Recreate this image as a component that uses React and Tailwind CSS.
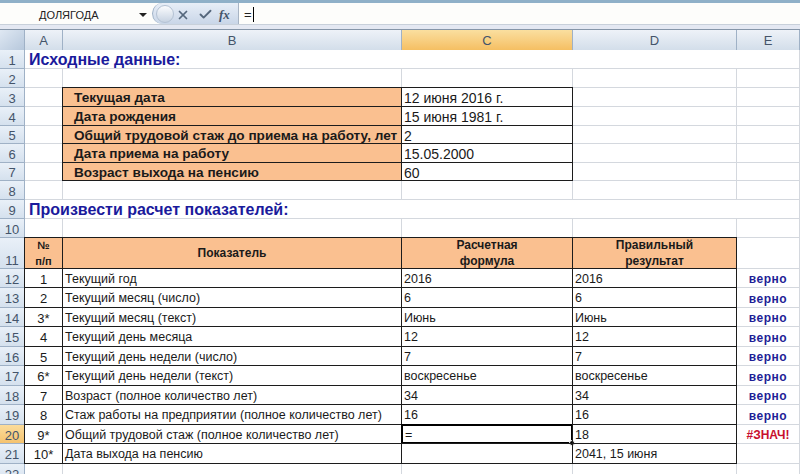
import { X, Check } from 'lucide-react'

const font = "font-['Liberation_Sans',Arial,sans-serif]"

const rowHeights = {
  1: 'h-[19px]', 2: 'h-[19px]', 3: 'h-[19px]', 4: 'h-[19px]', 5: 'h-[18px]', 6: 'h-[19px]', 7: 'h-[18px]',
  8: 'h-[19px]', 9: 'h-[19px]', 10: 'h-[19px]', 11: 'h-[31px]', 12: 'h-[19px]', 13: 'h-[20px]', 14: 'h-[19px]',
  15: 'h-[20px]', 16: 'h-[19px]', 17: 'h-[20px]', 18: 'h-[19px]', 19: 'h-[20px]', 20: 'h-[19px]', 21: 'h-[20px]', 22: 'h-[19px]',
}

const info = [
  ['Текущая дата', '12 июня 2016 г.'],
  ['Дата рождения', '15 июня 1981 г.'],
  ['Общий трудовой стаж до приема на работу, лет', '2'],
  ['Дата приема на работу', '15.05.2000'],
  ['Возраст выхода на пенсию', '60'],
]

const rows = [
  ['1', 'Текущий год', '2016', '2016', 'верно'],
  ['2', 'Текущий месяц (число)', '6', '6', 'верно'],
  ['3*', 'Текущий месяц (текст)', 'Июнь', 'Июнь', 'верно'],
  ['4', 'Текущий день месяца', '12', '12', 'верно'],
  ['5', 'Текущий день недели (число)', '7', '7', 'верно'],
  ['6*', 'Текущий день недели (текст)', 'воскресенье', 'воскресенье', 'верно'],
  ['7', 'Возраст (полное количество лет)', '34', '34', 'верно'],
  ['8', 'Стаж работы на предприятии (полное количество лет)', '16', '16', 'верно'],
  ['9*', 'Общий трудовой стаж (полное количество лет)', '=', '18', '#ЗНАЧ!'],
  ['10*', 'Дата выхода на пенсию', '', '2041, 15 июня', ''],
]

function Plain({ className = '', children }) {
  return (
    <div className={`border-r border-b border-[#d4d8de] min-w-0 pt-[2px] flex items-center whitespace-nowrap ${className}`}>
      {children}
    </div>
  )
}

function Boxed({ className = '', children }) {
  return (
    <div className={`relative border border-[#1c1c1c] -ml-px -mt-px min-w-0 flex items-center whitespace-nowrap ${className}`}>
      {children}
    </div>
  )
}

function RowHeader({ n, active }) {
  return (
    <div
      className={`${rowHeights[n]} border-r border-b border-[#9fb1c6] flex justify-center text-[13px] text-[#44546a] ${
        n === 11 ? 'items-end pb-[1px]' : 'items-center pt-[2px]'
      } ${active ? 'bg-gradient-to-b from-[#fbdc9b] to-[#f5c36f] text-[#5c4a20]' : 'bg-gradient-to-b from-[#e9f0f8] to-[#d5e1ee]'}`}
    >
      {n}
    </div>
  )
}

function ColHeader({ label, active }) {
  return (
    <div
      className={`h-[20px] border-r border-[#9fb1c6] flex items-center justify-center text-[13px] text-[#44546a] ${
        active ? 'bg-gradient-to-b from-[#fadf9f] to-[#f5bf62]' : 'bg-gradient-to-b from-[#eef2f8] to-[#d3deea]'
      }`}
    >
      {label}
    </div>
  )
}

function FormulaBar() {
  return (
    <div className="h-[25px] flex bg-[#fdfdfb] border-t-[3px] border-[#8fb0c8] border-b border-b-[#c8d0da]">
      <div className="w-[152px] flex items-center pl-[39px] pt-[3px] text-[11px] text-[#222]">
        <span className="flex-1">ДОЛЯГОДА</span>
        <span className="w-0 h-0 mr-[5px] border-x-[4px] border-x-transparent border-t-[4px] border-t-[#222]" />
      </div>
      <div className="w-[86px] relative flex items-center bg-gradient-to-b from-[#e8eef7] to-[#c9d6e8] rounded-l-[14px] border-l border-[#9db0c6]">
        <div className="w-[18px] h-[18px] ml-[3px] rounded-full bg-gradient-to-b from-[#fbfcfe] to-[#c7d3e2] border border-[#b4c2d3]" />
        <X size={14} strokeWidth={3} className="ml-[2px] mt-[2px] text-[#55677c]" />
        <Check size={15} strokeWidth={3} className="ml-[8px] mt-[2px] text-[#55677c]" />
        <span className="ml-[6px] mt-[2px] font-['Liberation_Serif',serif] italic font-bold text-[13px] text-[#44546a]">fx</span>
      </div>
      <div className="flex-1 flex items-center border-l border-[#a8b4c4] pl-[5px] pt-[2px] text-[13px] text-[#222]">
        =<span className="ml-px w-px h-[15px] bg-black" />
      </div>
    </div>
  )
}

export default function App() {
  const peach = 'bg-[#fac090]'
  const cell = 'pt-[2px]'
  const head = 'h-[32px] flex-col justify-center font-bold leading-[16px]'
  return (
    <div className={`w-[800px] h-[474px] overflow-hidden bg-white ${font}`}>
      <FormulaBar />
      <div className="h-[5px] bg-[#e4e8f2] border-b border-[#8595a8]" />

      <div className="grid grid-cols-[25px_38px_339px_171px_164px_63px] text-[12.5px] leading-none text-[#1a1a1a]">
        <div className="h-[20px] bg-gradient-to-br from-[#dfe8f3] to-[#b7c8dc] border-r border-[#9fb1c6]" />
        <ColHeader label="A" />
        <ColHeader label="B" />
        <ColHeader label="C" active />
        <ColHeader label="D" />
        <ColHeader label="E" />

        {/* row 1 */}
        <RowHeader n={1} />
        <Plain className="col-span-5 pl-[4px] text-[16px] font-bold text-[#1a1a9c]">Исходные данные:</Plain>

        <RowHeader n={2} />
        {[0, 1, 2, 3, 4].map((i) => <Plain key={i} />)}

        {/* rows 3-7 */}
        {info.map(([label, value], i) => (
          <div key={label} className="contents">
            <RowHeader n={i + 3} />
            <Plain />
            <Boxed className={`${peach} ${cell} pl-[11px] text-[13.6px] font-bold`}>{label}</Boxed>
            <Boxed className={`${cell} pl-[2px] text-[14px]`}>{value}</Boxed>
            <Plain />
            <Plain />
          </div>
        ))}

        <RowHeader n={8} />
        {[0, 1, 2, 3, 4].map((i) => <Plain key={i} />)}

        <RowHeader n={9} />
        <Plain className="col-span-5 pl-[4px] text-[16px] font-bold text-[#1a1a9c]">Произвести расчет показателей:</Plain>

        <RowHeader n={10} />
        {[0, 1, 2, 3, 4].map((i) => <Plain key={i} />)}

        {/* table head */}
        <RowHeader n={11} />
        <Boxed className={`${peach} ${head} text-[11px]`}>
          <span>№</span>
          <span>п/п</span>
        </Boxed>
        <Boxed className={`${peach} h-[32px] justify-center text-[12px] font-bold`}>Показатель</Boxed>
        <Boxed className={`${peach} ${head} text-[12px]`}>
          <span>Расчетная</span>
          <span>формула</span>
        </Boxed>
        <Boxed className={`${peach} ${head} text-[12px]`}>
          <span>Правильный</span>
          <span>результат</span>
        </Boxed>
        <Plain />

        {/* table body */}
        {rows.map(([num, name, formula, result, check], i) => {
          const n = i + 12
          const selected = n === 20
          return (
            <div key={n} className="contents">
              <RowHeader n={n} active={selected} />
              <Boxed className={`${cell} justify-center text-[13px]`}>{num}</Boxed>
              <Boxed className={`${cell} pl-[2px]`}>{name}</Boxed>
              <Boxed className={`${cell} pl-[2px] ${selected ? 'border-2 border-black' : ''}`}>
                {formula}
                {selected && (
                  <span className="absolute -right-[4px] -bottom-[4px] w-[6px] h-[6px] bg-black border border-white rounded-full" />
                )}
              </Boxed>
              <Boxed className={`${cell} pl-[2px]`}>{result}</Boxed>
              <Plain
                className={`justify-center font-bold text-[12px] ${check === 'верно' ? 'text-[#1f1f96] tracking-[0.5px]' : 'text-[#c8102e]'}`}
              >
                {check}
              </Plain>
            </div>
          )
        })}

        <RowHeader n={22} />
        {[0, 1, 2, 3, 4].map((i) => <Plain key={i} />)}
      </div>
    </div>
  )
}
